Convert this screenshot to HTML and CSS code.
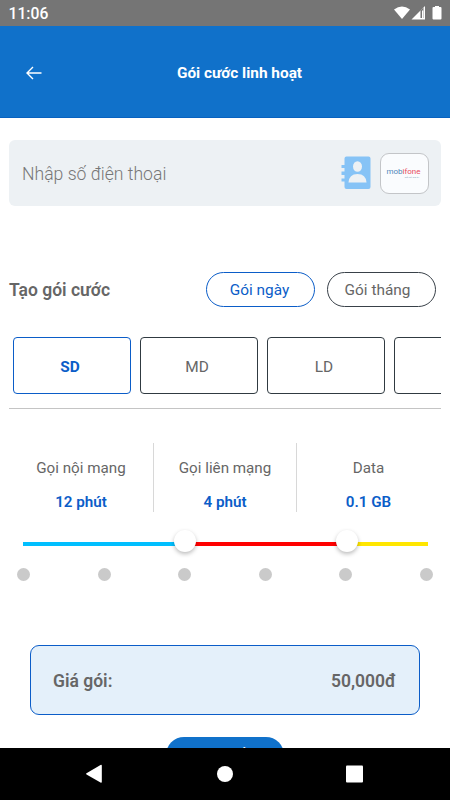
FILE: index.html
```html
<!DOCTYPE html>
<html lang="vi">
<head>
<meta charset="utf-8">
<meta name="viewport" content="width=device-width">
<title>Gói cước linh hoạt</title>
<link rel="stylesheet" href="styles.css">
</head>
<body>
<div class="status">
  <span>11:06</span>
  <svg width="50" height="18" viewBox="0 0 50 18" fill="#fff">
    <path d="M1 4.500Q9 -1.500 17 4.500L9 14Z"/>
    <path d="M18.500 14.500L32 1v13.500Z"/>
    <path d="M27.500 5.500l3-3V13h-3Z" fill="#757575"/>
    <path d="M29 5.500h1.300V13H29Z"/>
    <path d="M42 1h4v1h1.500q1 0 1 1v10.500q0 1-1 1h-7q-1 0-1-1V3q0-1 1-1H42Z"/>
  </svg>
</div>
<header class="header">
  <svg class="back" width="16" height="14" viewBox="0 0 16 14" fill="none" stroke="#fff" stroke-width="1.400"><path d="M7 1L1 7l6 6M1 7h14.500"/></svg>
  <h1>Gói cước linh hoạt</h1>
</header>
<main class="content">
  <div class="phone">
    <span class="placeholder">Nhập số điện thoại</span>
    <svg class="contacts" width="30" height="34" viewBox="0 0 30 34">
      <path fill="#86c3f6" d="M5.500 0.500H27.500Q29.500 0.500 29.500 2.500V31Q29.500 33 27.500 33H5.500Q3.500 33 3.500 31V25.500H0.500V22.500H3.500V19H0.500V15.500H3.500V12H0.500V9H3.500V2.500Q3.500 0.500 5.500 0.500Z"/>
      <ellipse cx="16.500" cy="10.500" rx="4.500" ry="5.300" fill="#edf1f4"/>
      <path fill="#edf1f4" d="M7.500 26.500Q8 18 16.500 18T25.500 26.500Z"/>
    </svg>
    <div class="carrier"><div class="logo">mob<i>ifone</i></div><small>kết nối giá trị</small></div>
  </div>
  <div class="heading">
    <h2>Tạo gói cước</h2>
    <button class="pill active">Gói ngày</button>
    <button class="pill">Gói tháng</button>
  </div>
  <div class="tabs">
    <div class="tab active">SD</div><div class="tab">MD</div><div class="tab">LD</div><div class="tab"></div>
  </div>
  <div class="stats">
    <div><span>Gọi nội mạng</span><b>12 phút</b></div>
    <div><span>Gọi liên mạng</span><b>4 phút</b></div>
    <div><span>Data</span><b>0.1 GB</b></div>
  </div>
  <div class="slider"><i class="blue"></i><i class="red"></i><i class="yellow"></i><b class="thumb first"></b><b class="thumb second"></b></div>
  <div class="dots"><i></i><i></i><i></i><i></i><i></i><i></i></div>
  <div class="price"><span>Giá gói:</span><span>50,000đ</span></div>
  <button class="submit">Chi tiết</button>
</main>
<nav class="nav">
  <svg width="450" height="52" viewBox="0 0 450 52" fill="#fff"><path d="M86.500 25.200L100.500 17q1.300-.6 1.300.8v16q0 1.400-1.300.8L86.500 26.500q-1-.7 0-1.300Z"/><circle cx="225" cy="26" r="8"/><rect x="346" y="17.500" width="17" height="17" rx="1"/></svg>
</nav>
</body>
</html>
```
FILE: styles.css
```css
* { box-sizing: border-box; }
body { margin: 0; width: 450px; height: 800px; display: flex; flex-direction: column; overflow: hidden; background: #fff; color: #666; font-family: Roboto, "Liberation Sans", sans-serif; }
h1, h2 { margin: 0; }
button { font-family: inherit; background: none; padding: 0; }
.status { height: 26px; flex: none; background: #757575; color: #fff; display: flex; justify-content: space-between; padding: 5px 7px 0 8.5px; font-size: 15.7px; line-height: 18px; font-weight: 500; }
.header { height: 92px; flex: none; background: #1071ca; border-bottom: 1px solid #0862c0; display: grid; grid-template-columns: 50px 1fr 50px; align-items: center; padding: 2px 0 0 1px; }
.back { margin-left: 25px; }
.header h1 { color: #fff; font-size: 15.4px; font-weight: 700; text-align: center; margin-left: 28px; }
.content { flex: 1; min-height: 0; overflow: hidden; display: flex; flex-direction: column; padding: 22px 9px 0; }
.phone { height: 66px; flex: none; border-radius: 6px; background: #edf1f4; display: flex; align-items: center; padding: 0 12px 0 13px; }
.placeholder { flex: 1; font-size: 17.6px; font-weight: 300; color: #777; padding-top: 2px; }
.contacts { margin-right: 9px; }
.carrier { width: 49px; height: 41px; border: 1px solid #c3c5c8; border-radius: 9px; background: #fafcfe; display: flex; flex-direction: column; align-items: center; justify-content: center; }
.logo { color: #4e86b9; font-size: 8px; line-height: 8px; padding: 1px 2px 0 0; }
.logo i { color: #e84b5b; font-style: normal; }
.carrier small { font-size: 2.5px; line-height: 3px; color: #8ba7bd; align-self: flex-end; margin-right: 9px; }
.heading { margin-top: 65px; height: 36px; flex: none; display: flex; align-items: center; }
.heading h2 { flex: 1; font-size: 17.5px; font-weight: 600; padding-top: 2px; }
.pill { width: 109px; height: 35px; border: 1px solid #394149; border-radius: 18px; font-size: 15.4px; font-weight: 400; color: #666; margin-right: 5px; padding: 1px 8px 0 0; }
.pill.active { border-color: #0b5dc8; color: #0b5dc8; margin-right: 12px; padding: 1px 2px 0 0; }
.tabs { margin-top: 30px; height: 72px; flex: none; border-bottom: 1px solid #c4c4c4; padding: 0 0 0 4px; overflow: hidden; display: flex; gap: 9px; }
.tab { width: 118px; height: 57px; flex: none; border: 1px solid #303a41; border-radius: 4px; display: flex; align-items: center; justify-content: center; font-size: 15.4px; padding: 2px 4px 0 0; }
.tab.active { border-color: #0b5dc8; color: #0b5dc8; font-weight: 700; }
.stats { margin: 34px 0 0; height: 69px; flex: none; display: grid; grid-template-columns: 145px 143px 144px; text-align: center; }
.stats div { border-right: 1px solid #d8d8d8; display: flex; flex-direction: column; padding-top: 16px; gap: 15px; font-size: 15.2px; line-height: 19px; }
.stats div:last-child { border: 0; padding-right: 1px; }
.stats b { color: #0b5dc8; font-weight: 600; }
.slider { position: relative; height: 4px; flex: none; margin: 30px 13px 0 14px; display: flex; }
.blue { width: 162px; background: #00bfff; }
.red { width: 162px; background: #f00; }
.yellow { flex: 1; background: #ffe600; }
.thumb { position: absolute; width: 22px; height: 22px; top: -12px; border-radius: 50%; background: #fff; box-shadow: 0 2px 4px #0004; }
.first { left: 151px; }
.second { left: 313px; }
.dots { display: flex; justify-content: space-between; flex: none; margin: 22px 8.5px 0 8px; }
.dots i { width: 13px; height: 13px; border-radius: 50%; background: #cacaca; }
.price { height: 70px; flex: none; margin: 64px 21px 0; border: 1px solid #0b5dc8; border-radius: 9px; background: #e4f0fa; display: flex; align-items: center; justify-content: space-between; padding: 2px 23px 0 22px; font-size: 17.5px; font-weight: 600; }
.submit { width: 118px; height: 36px; flex: none; align-self: center; margin-top: 22px; border: 0; border-radius: 18px; background: #1071ca; color: #fff; font-size: 15.4px; font-weight: 700; padding-bottom: 2px; }
.nav { height: 52px; flex: none; background: #000; }
.nav svg { display: block; }
```
